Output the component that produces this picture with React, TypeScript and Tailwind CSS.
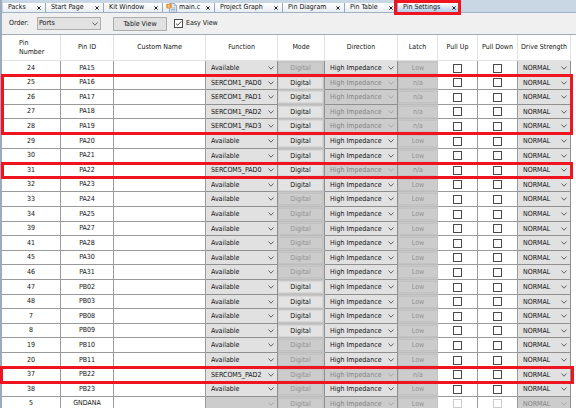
import React, { useState } from 'react';
import { clsx } from 'clsx';

interface PinRow {
  number: number;
  id: string;
  fn: string;
  digital?: boolean;
  reserved?: boolean;
}

interface PinGroup {
  highlight?: string;
  pins: PinRow[];
}

// Consecutive pins share a group so that one outline can surround all of them
const GROUPS: PinGroup[] = [
  { pins: [{ number: 24, id: 'PA15', fn: 'Available' }] },
  {
    highlight: '-top-0.5 -bottom-px -left-px -right-0.5',
    pins: [
      { number: 25, id: 'PA16', fn: 'SERCOM1_PAD0', digital: true },
      { number: 26, id: 'PA17', fn: 'SERCOM1_PAD1', digital: true },
      { number: 27, id: 'PA18', fn: 'SERCOM1_PAD2', digital: true },
      { number: 28, id: 'PA19', fn: 'SERCOM1_PAD3', digital: true },
    ],
  },
  {
    pins: [
      { number: 29, id: 'PA20', fn: 'Available', digital: true },
      { number: 30, id: 'PA21', fn: 'Available', digital: true },
    ],
  },
  {
    highlight: '-top-px -bottom-px -left-px -right-0.5',
    pins: [{ number: 31, id: 'PA22', fn: 'SERCOM5_PAD0', digital: true }],
  },
  {
    pins: [
      { number: 32, id: 'PA23', fn: 'Available', digital: true },
      { number: 33, id: 'PA24', fn: 'Available' },
      { number: 34, id: 'PA25', fn: 'Available' },
      { number: 39, id: 'PA27', fn: 'Available' },
      { number: 41, id: 'PA28', fn: 'Available' },
      { number: 45, id: 'PA30', fn: 'Available' },
      { number: 46, id: 'PA31', fn: 'Available' },
      { number: 47, id: 'PB02', fn: 'Available', digital: true },
      { number: 48, id: 'PB03', fn: 'Available', digital: true },
      { number: 7, id: 'PB08', fn: 'Available', digital: true },
      { number: 8, id: 'PB09', fn: 'Available', digital: true },
      { number: 19, id: 'PB10', fn: 'Available' },
      { number: 20, id: 'PB11', fn: 'Available' },
    ],
  },
  {
    highlight: '-top-0.5 -bottom-0.5 -left-0.5 -right-[3px]',
    pins: [{ number: 37, id: 'PB22', fn: 'SERCOM5_PAD2' }],
  },
  {
    pins: [
      { number: 38, id: 'PB23', fn: 'Available' },
      { number: 5, id: 'GNDANA', fn: '', reserved: true },
    ],
  },
];

const ALL_PINS = GROUPS.flatMap((group) => group.pins);

const TABS = [
  { label: 'Packs', width: 'w-[43px]' },
  { label: 'Start Page', width: 'w-[58px]' },
  { label: 'Kit Window', width: 'w-[59px]' },
  { label: 'main.c', width: 'w-[52px]', file: true },
  { label: 'Project Graph', width: 'w-[68px]' },
  { label: 'Pin Diagram', width: 'w-[62px]' },
  { label: 'Pin Table', width: 'w-[53px]' },
  { label: 'Pin Settings', width: 'w-[63px]', active: true },
];

const COLUMNS = [
  { label: 'Pin Number', width: 'w-[59px]' },
  { label: 'Pin ID', width: 'w-[53px]' },
  { label: 'Custom Name', width: '' },
  { label: 'Function', width: 'w-[72px]' },
  { label: 'Mode', width: 'w-[47px]' },
  { label: 'Direction', width: 'w-[73px]' },
  { label: 'Latch', width: 'w-[40px]' },
  { label: 'Pull Up', width: 'w-[40px]' },
  { label: 'Pull Down', width: 'w-[40px]' },
  { label: 'Drive Strength', width: 'w-[53px]' },
];

function Chevron({ className }: { className: string }) {
  return (
    <svg
      viewBox="0 0 6 4"
      className={clsx('pointer-events-none absolute h-1 w-1.5', className)}
      fill="none"
      stroke="currentColor"
      strokeWidth="0.9"
    >
      <path d="M0.5 0.5 L3 3.2 L5.5 0.5" />
    </svg>
  );
}

function CellSelect({ label, value, disabled }: { label: string; value: string; disabled?: boolean }) {
  return (
    <div className="relative flex items-center">
      <select
        aria-label={label}
        disabled={disabled}
        defaultValue={value}
        className={clsx(
          'h-3 w-full appearance-none pl-[5px] leading-3 opacity-100',
          disabled ? 'text-[#858585]' : 'text-[#111111]'
        )}
      >
        <option>{value}</option>
      </select>
      <Chevron className={clsx('right-[3px]', disabled ? 'text-[#a5a5a5]' : 'text-[#555555]')} />
    </div>
  );
}

function CellButton({ children, disabled }: { children: React.ReactNode; disabled?: boolean }) {
  return (
    <button
      type="button"
      disabled={disabled}
      className={clsx(
        'block h-3 w-full border text-center leading-[10px]',
        disabled ? 'border-[#c2c2c2] bg-[#cccccc] text-[#909090]' : 'border-[#d6d6d6] bg-[#e3e3e3] text-[#111111]'
      )}
    >
      {children}
    </button>
  );
}

function CellCheckbox({ label, disabled }: { label: string; disabled?: boolean }) {
  return (
    <input
      type="checkbox"
      aria-label={label}
      disabled={disabled}
      className={clsx(
        'mx-auto block size-[9px] appearance-none border bg-white checked:bg-[#555555]',
        disabled ? 'border-[#cccccc]' : 'border-[#4a4a4a]'
      )}
    />
  );
}

function FileIcon() {
  return (
    <svg viewBox="0 0 12 10" className="mr-px h-2.5 w-3 shrink-0">
      <path d="M3.5 0.5 H8.5 L10.5 2.5 V9.5 H3.5 Z" fill="#dcebf8" stroke="#7794b4" strokeWidth="0.7" />
      <path d="M8.3 0.5 V2.7 H10.5" fill="#ffffff" stroke="#7794b4" strokeWidth="0.6" />
      <path d="M6 5 H9.3 M5 6.5 H9.3 M5 8 H9.3" stroke="#86a6c7" strokeWidth="0.7" />
      <rect x="0.3" y="0.8" width="5.4" height="4.6" rx="0.8" fill="#e78a24" />
      <path d="M4.2 2.2 H2.2 V4.1 H4.2" fill="none" stroke="#fff3df" strokeWidth="0.7" />
    </svg>
  );
}

function TabBar() {
  return (
    <div className="flex h-[13px] border-b border-[#9db2c9] bg-[#c9d6e4] pt-[3px] pl-px">
      {TABS.map((tab) => (
        <div
          key={tab.label}
          className={clsx(
            'relative flex shrink-0 items-center border-r border-[#93a9c2] pr-1',
            tab.width,
            tab.file ? 'pl-[3px]' : 'pl-[5px]',
            tab.active ? 'bg-linear-to-b from-white to-[#b3cbe8]' : 'bg-linear-to-b from-white to-[#e9edf2]'
          )}
        >
          {tab.file && <FileIcon />}
          <button type="button" className="whitespace-nowrap leading-[9px]">
            {tab.label}
          </button>
          <button type="button" aria-label={`Close ${tab.label}`} className="ml-auto">
            <svg viewBox="0 0 4 4" className="mt-px size-1" stroke="#222222" strokeWidth="1">
              <path d="M0.4 0.4 L3.6 3.6 M3.6 0.4 L0.4 3.6" />
            </svg>
          </button>
          {tab.active && (
            <span className="pointer-events-none absolute -top-[3px] -right-px -bottom-[3px] -left-1 z-10 border-3 border-[#ee1420]" />
          )}
        </div>
      ))}
    </div>
  );
}

function Toolbar() {
  const [easyView, setEasyView] = useState(true);

  return (
    <div className="flex h-[22px] items-center border-b border-[#a3abb5] bg-[#f0f0f0] pl-[7px]">
      <label htmlFor="order" className="w-7">
        Order:
      </label>
      <div className="relative flex items-center">
        <select
          id="order"
          defaultValue="Ports"
          className="h-[13px] w-16 appearance-none border border-[#adadad] bg-[#e1e1e1] pl-px leading-[11px]"
        >
          <option>Ports</option>
          <option>Pins</option>
        </select>
        <Chevron className="right-[3px] text-[#555555]" />
      </div>
      <button
        type="button"
        className="ml-3 h-3.5 w-[54px] border border-[#adadad] bg-[#e1e1e1] leading-3"
      >
        Table View
      </button>
      <label className="ml-[7px] flex items-center gap-[3px]">
        <span className="relative flex">
          <input
            type="checkbox"
            checked={easyView}
            onChange={(e) => setEasyView(e.target.checked)}
            className="size-[9px] appearance-none border border-[#4a4a4a] bg-white"
          />
          {easyView && (
            <svg
              viewBox="0 0 9 9"
              className="pointer-events-none absolute inset-0 size-[9px]"
              fill="none"
              stroke="#333333"
              strokeWidth="0.9"
            >
              <path d="M2 4.6 L3.8 6.3 L7.2 2.4" />
            </svg>
          )}
        </span>
        Easy View
      </label>
    </div>
  );
}

function PinTableRow({ pin, highlight }: { pin: PinRow; highlight?: string }) {
  const assigned = pin.fn.startsWith('SERCOM');
  const index = ALL_PINS.indexOf(pin);
  const height = index % 5 === 1 || index % 5 === 3 ? 'h-3.5' : 'h-[15px]';
  const plain = 'border-r border-b border-[#9a9a9a] p-0 text-center';
  const combo = 'border-r border-b border-[#8f8f8f] p-0';
  const locked = assigned || pin.reserved;

  return (
    <tr className={height}>
      <td className={plain}>
        {pin.number}
        {highlight && (
          <span className={clsx('pointer-events-none absolute z-10 border-3 border-[#ee1420]', highlight)} />
        )}
      </td>
      <td className={plain}>{pin.id}</td>
      <td className={plain}></td>
      <td className={clsx(combo, pin.reserved ? 'bg-[#cccccc]' : 'bg-[#e1e1e1]')}>
        <CellSelect label={`${pin.id} function`} value={pin.fn} disabled={pin.reserved} />
      </td>
      <td className="border-r border-b border-r-[#8f8f8f] border-b-[#bcbcbc] bg-[#c6c6c6] p-0 pr-px">
        <CellButton disabled={!pin.digital}>Digital</CellButton>
      </td>
      <td className={clsx(combo, locked ? 'bg-[#cccccc]' : 'bg-[#e1e1e1]')}>
        <CellSelect label={`${pin.id} direction`} value="High Impedance" disabled={locked} />
      </td>
      <td className="border-b border-[#bcbcbc] bg-[#c6c6c6] p-0">
        <CellButton disabled>{assigned ? 'n/a' : 'Low'}</CellButton>
      </td>
      <td className={plain}>
        <CellCheckbox label={`${pin.id} pull up`} disabled={pin.reserved} />
      </td>
      <td className={plain}>
        <CellCheckbox label={`${pin.id} pull down`} disabled={pin.reserved} />
      </td>
      <td className={clsx(combo, pin.reserved ? 'bg-[#cccccc]' : 'bg-[#e1e1e1]')}>
        <CellSelect label={`${pin.id} drive strength`} value="NORMAL" disabled={pin.reserved} />
      </td>
    </tr>
  );
}

export default function App() {
  return (
    <div className="h-screen overflow-hidden bg-white font-['DejaVu_Sans_Condensed','DejaVu_Sans',sans-serif] text-[7px] leading-[9px] text-[#111111]">
      <div className="min-h-full border-l-2 border-[#9aabbd]">
        <TabBar />
        <Toolbar />
        <div className="pr-[5px]">
          <table className="w-full table-fixed border-separate border-spacing-0">
            <colgroup>
              {COLUMNS.map((col) => (
                <col key={col.label} className={col.width} />
              ))}
            </colgroup>
            <thead>
              <tr className="h-[26px]">
                {COLUMNS.map((col, i) => (
                  <th key={col.label} className="border-r border-b border-[#e2e2e2] p-0 font-normal">
                    {i === 0 ? <span className="mx-auto block w-6 text-left">{col.label}</span> : col.label}
                  </th>
                ))}
              </tr>
            </thead>
            {GROUPS.map((group) => (
              <tbody key={group.pins[0].id} className="relative">
                {group.pins.map((pin, i) => (
                  <PinTableRow key={pin.id} pin={pin} highlight={i === 0 ? group.highlight : undefined} />
                ))}
              </tbody>
            ))}
          </table>
        </div>
      </div>
    </div>
  );
}
